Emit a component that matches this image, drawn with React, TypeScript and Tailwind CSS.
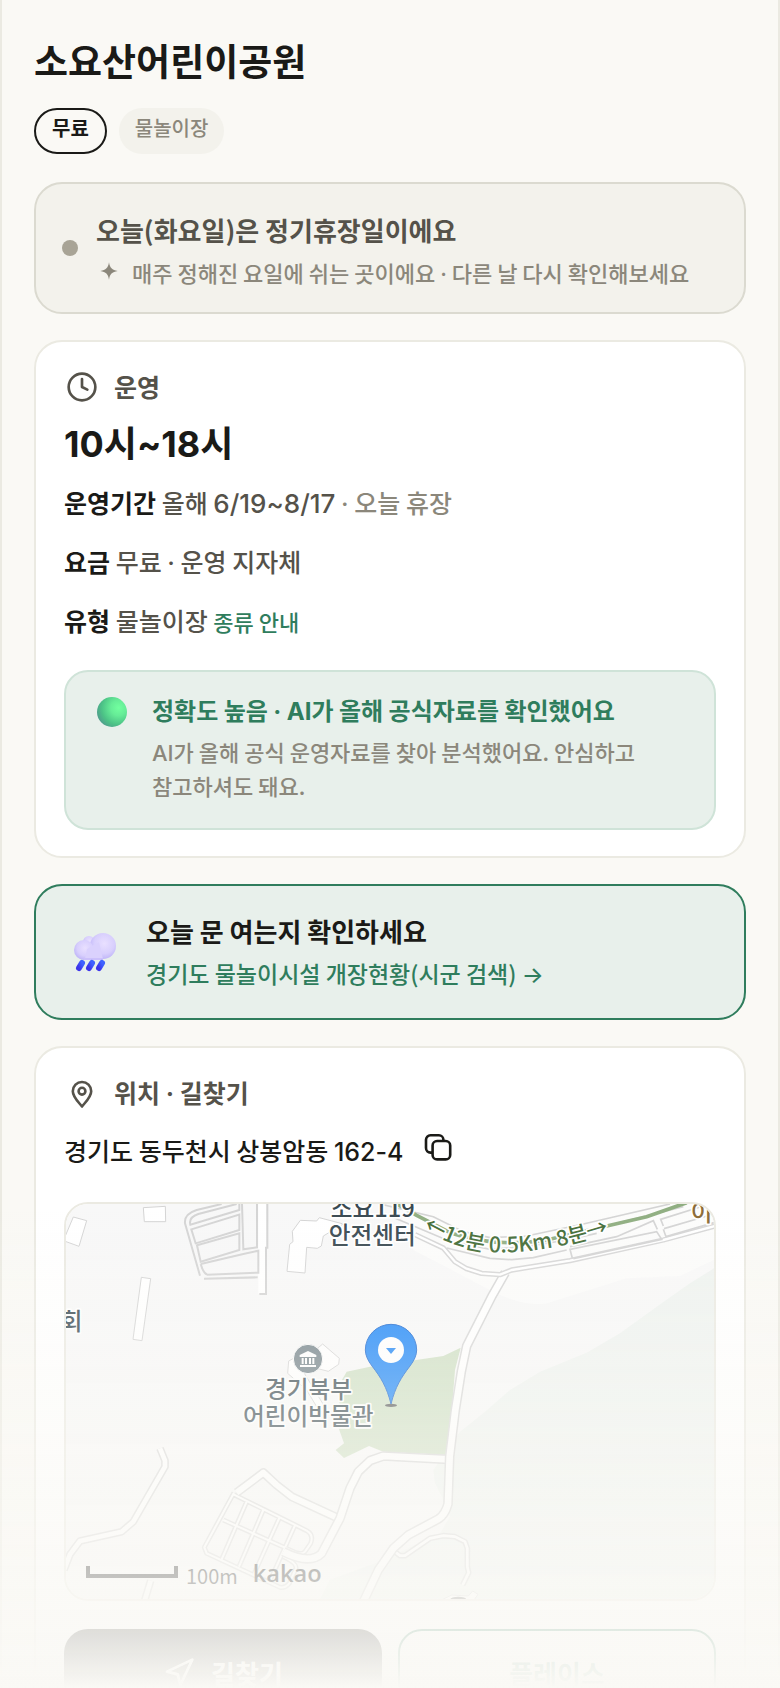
import React from 'react';
import { Clock, Navigation } from 'lucide-react';

const details = [
  {
    label: '운영기간',
    value: (
      <>
        올해{' '}
        <span className="text-[26px] leading-none">
          <Latin>6/19~8/17</Latin>
        </span>{' '}
        <span className="text-[#8b877b]">
          <Latin>·</Latin> 오늘 휴장
        </span>
      </>
    ),
  },
  {
    label: '요금',
    value: (
      <>
        무료 <Latin>·</Latin> 운영 지자체
      </>
    ),
  },
  {
    label: '유형',
    value: (
      <>
        물놀이장{' '}
        <a href="#types" className="text-[22px] leading-none text-[#2f7d5d]">
          종류 안내
        </a>
      </>
    ),
  },
];

// digits, latin letters and punctuation use Inter next to the Korean face
function Latin({ children }: { children: React.ReactNode }) {
  return <span className="font-[Inter,sans-serif] leading-none">{children}</span>;
}

function SparkIcon({ className }: { className?: string }) {
  return (
    <svg viewBox="0 0 24 24" fill="currentColor" className={className} aria-hidden="true">
      <path d="M12 4c.8 5.2 2.8 7.2 8 8-5.200.8-7.200 2.800-8 8-.8-5.200-2.800-7.200-8-8 5.200-.8 7.200-2.800 8-8z" />
    </svg>
  );
}

function PinIcon({ className }: { className?: string }) {
  return (
    <svg viewBox="0 0 32 32" fill="none" stroke="currentColor" strokeWidth="2.6" strokeLinejoin="round" className={className} aria-hidden="true">
      <path d="M16 29.500C12.500 25 6.800 20 6.800 14.200a9.200 9.200 0 0 1 18.400 0C25.200 20 19.500 25 16 29.500z" />
      <circle cx="16" cy="14.2" r="3.4" />
    </svg>
  );
}

function CopyIcon({ className }: { className?: string }) {
  return (
    <svg viewBox="0 0 32 32" fill="none" stroke="currentColor" strokeWidth="2.6" strokeLinejoin="round" className={className} aria-hidden="true">
      <rect x="9.600" y="9" width="17.600" height="18.400" rx="4.500" />
      <path d="M9.600 20.600H7.500a4.500 4.500 0 0 1-4.500-4.500V7.800a4.500 4.500 0 0 1 4.500-4.500h8.400a4.500 4.500 0 0 1 4.500 4.500V9" />
    </svg>
  );
}

function GreenBall({ className }: { className?: string }) {
  return (
    <svg viewBox="0 0 36 36" className={className} aria-hidden="true">
      <defs>
        <radialGradient id="ball" cx="0.72" cy="0.36" r="0.75">
          <stop offset="0" stopColor="#72ff9f" />
          <stop offset="0.35" stopColor="#66ec97" />
          <stop offset="0.75" stopColor="#4cc286" />
          <stop offset="1" stopColor="#4fa08c" />
        </radialGradient>
      </defs>
      <circle cx="18" cy="18" r="15" fill="url(#ball)" />
    </svg>
  );
}

function RainCloud({ className }: { className?: string }) {
  return (
    <svg viewBox="9 0 60 60" className={className} aria-hidden="true">
      <defs>
        <radialGradient id="puff" cx="0.55" cy="0.4" r="0.6">
          <stop offset="0" stopColor="#e9e0ff" />
          <stop offset="0.65" stopColor="#d8cffd" />
          <stop offset="1" stopColor="#c0b6f8" />
        </radialGradient>
        <linearGradient id="rain" x1="1" y1="0" x2="0" y2="1">
          <stop offset="0" stopColor="#3f63ff" />
          <stop offset="1" stopColor="#3d35ea" />
        </linearGradient>
      </defs>
      <circle cx="34" cy="20" r="6" fill="url(#puff)" />
      <circle cx="48" cy="24" r="13" fill="url(#puff)" />
      <circle cx="29" cy="28" r="10" fill="url(#puff)" />
      <path d="M32 27L44 20L48 37H30z" fill="#dad1fd" />
      <path d="M29 37h19" stroke="#cbc0fb" strokeWidth="2" />
      <g stroke="url(#rain)" strokeWidth="6" strokeLinecap="round">
        <path d="M27 41l-3 5" />
        <path d="M37 41l-3 5" />
        <path d="M47 41l-3 5" />
      </g>
    </svg>
  );
}

// casing first, then the lighter surface on top
function Road({ d, width }: { d: string; width: number }) {
  return (
    <g fill="none" strokeLinejoin="round">
      <path d={d} stroke="#d6d6d6" strokeWidth={width + 9} />
      <path d={d} stroke="#ffffff" strokeWidth={width} />
    </g>
  );
}

const blockStreets =
  'M552 908L463 1072L470 1090L690 1192Q705 1195 718 1180L738 1135Q742 1120 700 1100M552 914L770 1022Q792 1035 782 1060L765 1085Q755 1095 738 1088L520 990M590 935L515 1108M640 960L567 1130M688 984L612 1152M735 1006L660 1172';

function LocationMap() {
  return (
    <svg
      viewBox="48 42 1944 1185"
      preserveAspectRatio="xMidYMid slice"
      className="block h-full w-full font-['Noto_Sans_CJK_KR',sans-serif]"
      role="img"
      aria-label="지도"
    >
      <defs>
        <path id="trail" d="M1118 118C1220 178 1300 192 1400 186S1610 152 1700 122" />
      </defs>
      <rect x="48" y="42" width="1944" height="1185" fill="#f8f8f8" />
      <path d="M1040 42L1090 180L1330 305Q1420 350 1490 340L1730 265L1890 258L1992 210V42z" fill="#fcfcfb" />
      <path
        d="M1992 235L1920 280L1820 350L1710 430L1610 488L1470 545L1380 600L1305 665L1230 725L1150 840L1155 880L1180 930L1200 980L1170 1030L1000 1110L840 1170L810 1227H1992z"
        fill="#eff3f0"
      />
      <path d="M890 545L960 530L1180 498L1232 473L1215 540L1195 795L1000 785L957 768L882 804L857 780L882 760L866 715L870 580z" fill="#cedfc3" />

      <g fill="#ffffff" stroke="#d4d4d4" strokeWidth="3">
        <path d="M70 81L110 92L87 169L40 152z" />
        <path d="M280 53L346 49L347 95L283 95z" />
        <path d="M274 262L302 266L276 452L249 448z" />
        <path d="M751 91L800 93L808 83L880 102L820 138L814 168L802 175L770 172L765 249L711 244L719 163L729 155L727 124z" />
        <path d="M818 462L868 505L866 523L835 544L780 530L760 510z" />
        <path d="M740 500L716 513L713 550L770 600L800 650L830 660L760 545z" />
      </g>

      <path d="M637 42V312" stroke="#ffffff" strokeWidth="24" />
      <g fill="none" stroke="#d4d4d4" strokeWidth="6">
        <path d="M515 42L440 60Q402 72 405 100L450 257" />
        <path d="M560 42L445 72Q415 82 421 104L568 60V42" />
        <path d="M424 118L568 74V120L437 160z" />
        <path d="M441 166L568 130V180L452 215z" />
        <path d="M576 42L580 178L621 172V42" />
        <path d="M652 42V173H648V312H628" />
        <path d="M452 222L580 192L625 182V248L472 254Q460 250 452 222" />
        <path d="M462 266L623 262" />
      </g>

      <Road d="M330 775L345 812L345 830L250 995L215 1025L90 1053L60 1093L42 1140" width={14} />
      <Road d="M302 1172L283 1235" width={14} />
      <Road d={blockStreets} width={6} />
      <Road d="M560 908L640 848L680 885L725 920L865 985" width={18} />
      <Road d="M1195 808L1000 798L960 812L925 845L900 895L870 985L815 1090Q780 1125 700 1085" width={20} />
      <Road d="M1032 1083L1050 1097H1065L1140 1045L1180 1037L1215 1040L1245 1055L1252 1075V1130L1256 1148L1238 1185" width={8} />
      <Road d="M1366 248L1325 320L1250 468L1234 545L1216 660L1199 800L1194 942Q1185 975 1165 987L1075 1035L1030 1075L985 1140L940 1235" width={20} />
      <path d="M1175 1230L1205 1215L1255 1218L1268 1203L1284 1213L1272 1230" fill="#ffffff" stroke="#d6d6d6" strokeWidth="3" />
      <ellipse cx="1225" cy="1228" rx="24" ry="8" fill="#777777" />

      <Road d="M1095 134L1180 174L1215 215L1250 236L1295 250L1350 254L1385 240L1560 212L1840 150L1995 108" width={7} />
      <g fill="none" stroke="#d4d4d4" strokeWidth="5">
        <path d="M990 42L1150 80L1240 125L1320 143L1430 138L1600 102L1860 42" />
        <path d="M1020 78L1190 150L1320 178L1430 170L1550 150L1640 130" />
        <path d="M1190 174L1320 205L1385 209L1450 203L1550 180M1567 205L1560 178L1820 125L1835 148L1570 206M1560 170L1700 140L1810 92L1822 118" />
        <path d="M1700 100L1900 50M1840 108L1832 88L1960 48M1842 116L1992 72M1848 140L1840 118M1848 140L1992 98" />
      </g>
      <path d="M1040 42L1100 76L1200 128Q1330 172 1480 152L1680 106L1790 80L1910 38" fill="none" stroke="#8fae80" strokeWidth="11" />

      <g fill="#37474f" stroke="#ffffff" strokeWidth="10" strokeLinejoin="round" fontSize="71" fontWeight="500" paintOrder="stroke">
        <text x="842" y="81">소요119</text>
        <text x="836" y="161">안전센터</text>
        <text x="32" y="419">회</text>
        <text x="645" y="625">경기북부</text>
        <text x="579" y="705">어린이박물관</text>
        <text x="1922" y="92" fill="#8b6a35">이</text>
        <text fontSize="64" fill="#3f6a33">
          <textPath href="#trail">←12분 0.5Km 8분→</textPath>
        </text>
      </g>

      <circle cx="774" cy="507" r="44" fill="#728188" stroke="#ffffff" strokeWidth="3" />
      <path d="M774 483L799 495V501H749V495zM755 504H761V522H755zM765 504H771V522H765zM777 504H783V522H777zM787 504H793V522H787zM750 525H798V531H750z" fill="#ffffff" />

      <ellipse cx="1023" cy="646" rx="18" ry="5" fill="#555555" />
      <path
        d="M1023 642C1010 590 992 562 966 528Q946 502 946 480A77 77 0 0 1 1100 480Q1100 502 1080 528C1054 562 1036 590 1023 642z"
        fill="#1a85f8"
        stroke="#1565d0"
        strokeWidth="3"
      />
      <circle cx="1023" cy="480" r="39" fill="#ffffff" />
      <path d="M1008 474H1038L1023 492z" fill="#1a85f8" />

      <path d="M114 1128V1158H378V1128" fill="none" stroke="#111111" strokeWidth="12" />
      <text x="408" y="1181" fontSize="60" fill="#111111">
        100m
      </text>
      <text x="608" y="1176" fontSize="71" fill="#111111" fontWeight="600" className="font-['Open_Sans']">
        kakao
      </text>
    </svg>
  );
}

export default function App() {
  return (
    <main className="relative h-screen overflow-hidden border-x-2 border-[#ebeae2] bg-[#faf9f5] px-8 pt-9 font-['Noto_Sans_CJK_KR',sans-serif] text-[#1a1a17]">
      <h1 className="text-[37px] leading-[48px] font-bold">소요산어린이공원</h1>

      <div className="mt-6 flex gap-3 text-[20px] leading-7">
        <span className="rounded-full border-2 border-[#1a1a17] px-4 pt-1 pb-2.5 font-bold">무료</span>
        <span className="rounded-full bg-[#f3f2ec] px-4 pt-1.5 pb-3 font-medium text-[#8b877b]">물놀이장</span>
      </div>

      <div className="mt-7 flex flex-col gap-[26px]">
        <section className="flex items-center gap-[18px] rounded-[28px] border-2 border-[#dbdad0] bg-[#f3f2ec] px-[26px] py-5">
          <span className="size-4 shrink-0 rounded-full bg-[#a8a496]"></span>
          <div className="pt-2 pb-0.5">
            <h2 className="text-[26px] leading-9 font-bold text-[#55524a]">오늘(화요일)은 정기휴장일이에요</h2>
            <div className="mt-1.5 flex gap-2.5 text-[22px] leading-9 font-medium text-[#8b877b]">
              <SparkIcon className="mt-1 size-[26px] shrink-0" />
              <p>
                매주 정해진 요일에 쉬는 곳이에요 <Latin>·</Latin> 다른 날 다시 확인해보세요
              </p>
            </div>
          </div>
        </section>

        <section className="rounded-[28px] border-2 border-[#ebeae2] bg-white px-7 py-[26px]">
          <h2 className="flex items-center gap-3.5 text-[25px] leading-9 font-bold text-[#55524a]">
            <span className="flex w-9 justify-center pt-0.5">
              <Clock className="size-8" strokeWidth={2} />
            </span>
            운영
          </h2>
          <p className="mt-4 font-[Inter,'Noto_Sans_CJK_KR',sans-serif] text-[36px] leading-[48px] font-bold">10시~18시</p>
          <div className="mt-3.5 flex flex-col gap-[19px] text-[25px] leading-10 font-medium text-[#55524a]">
            {details.map((row) => (
              <p key={row.label}>
                <strong className="font-bold text-[#1a1a17]">{row.label}</strong> {row.value}
              </p>
            ))}
          </div>
          <div className="mt-[30px] flex items-start gap-[22px] rounded-[24px] border-2 border-[#cfe3d8] bg-[#e8f0eb] px-7 pt-5 pb-[26px]">
            <GreenBall className="mt-0.5 size-9 shrink-0" />
            <div>
              <h3 className="text-[24px] leading-9 font-bold text-[#2f7d5d]">
                정확도 높음 <Latin>·</Latin> <Latin>AI</Latin>가 올해 공식자료를 확인했어요
              </h3>
              <p className="mt-1.5 text-[22px] leading-[34px] font-medium break-keep text-[#8b877b]">
                <Latin>AI</Latin>가 올해 공식 운영자료를 찾아 분석했어요. 안심하고 참고하셔도 돼요.
              </p>
            </div>
          </div>
        </section>

        <a
          href="#status"
          className="flex items-center gap-[22px] rounded-[28px] border-2 border-[#2f7d5d] bg-[#e8f0eb] px-7 py-[27px]"
        >
          <RainCloud className="size-[60px] shrink-0" />
          <span>
            <span className="block text-[26px] leading-9 font-bold">오늘 문 여는지 확인하세요</span>
            <span className="mt-1.5 block text-[23px] leading-9 font-medium text-[#2f7d5d]">
              경기도 물놀이시설 개장현황(시군 검색) <Latin>→</Latin>
            </span>
          </span>
        </a>

        <section className="rounded-[28px] border-2 border-[#ebeae2] bg-white px-7 py-[26px]">
          <h2 className="flex items-center gap-3.5 text-[25px] leading-9 font-bold text-[#55524a]">
            <span className="flex w-9 justify-center pt-0.5">
              <PinIcon className="size-8" />
            </span>
            <span>
              위치 <Latin>·</Latin> 길찾기
            </span>
          </h2>
          <div className="mt-5 flex gap-5 text-[25px] leading-10 font-medium">
            <p>
              경기도 동두천시 상봉암동 <Latin>162-4</Latin>
            </p>
            <button type="button" aria-label="주소 복사" className="self-start pt-0.5">
              <CopyIcon className="size-8" />
            </button>
          </div>
          <div className="mt-8 h-[399px] overflow-hidden rounded-[24px] border-2 border-[#ebeae2]">
            <LocationMap />
          </div>
          <div className="mt-7 grid grid-cols-2 gap-4 text-[26px] leading-9 font-bold">
            <button type="button" className="flex h-22 items-center justify-center gap-4 rounded-[24px] bg-[#1a1a17] text-white">
              <Navigation size={32} strokeWidth={2} />
              길찾기
            </button>
            <button type="button" className="h-22 rounded-[24px] border-2 border-[#2f7d5d] text-[#2f7d5d]">
              플레이스
            </button>
          </div>
        </section>
      </div>

      <div className="pointer-events-none fixed inset-x-0 bottom-0 h-[488px] bg-linear-to-b from-[#faf9f5]/0 to-[#faf9f5]"></div>
    </main>
  );
}
